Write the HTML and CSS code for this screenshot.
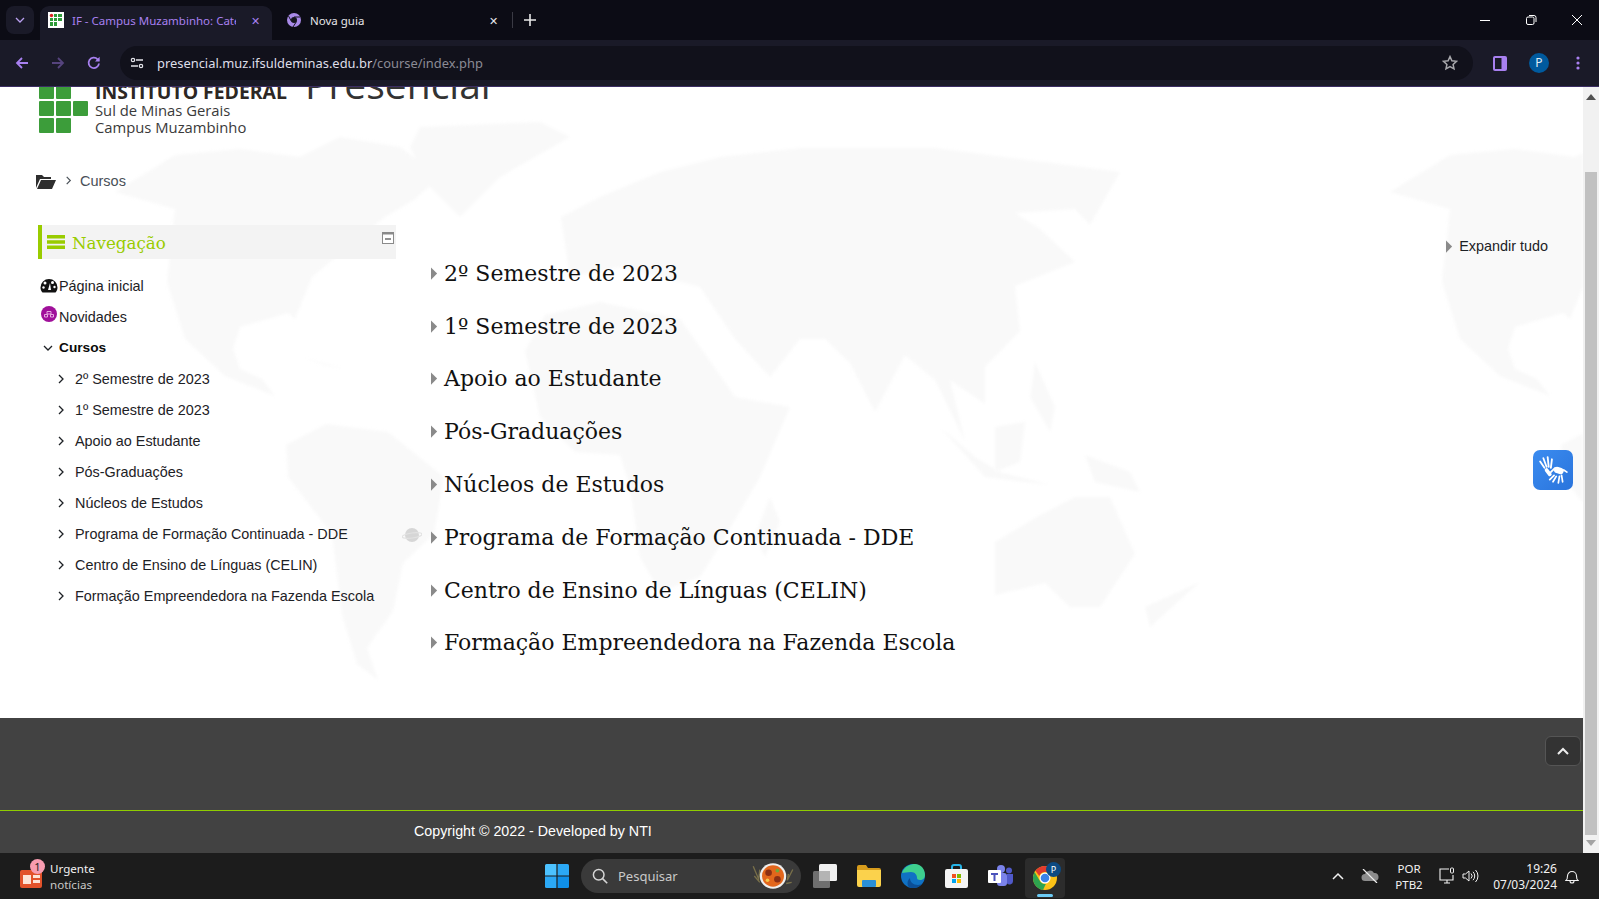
FILE: index.html
```html
<!DOCTYPE html>
<html lang="pt-BR">
<head>
  <meta charset="UTF-8" />
  <meta name="viewport" content="width=device-width, initial-scale=1.0" />
  <title>IF - Campus Muzambinho: Categorias</title>
  <link rel="stylesheet" href="styles.css">
</head>
<body>
  <svg class="defs" width="0" height="0">
    <defs>
      <symbol id="chev-right" viewBox="0 0 10 10"><path d="M3 1l4 4-4 4" fill="none" stroke="currentColor" stroke-width="1.3"/></symbol>
      <symbol id="chev-down" viewBox="0 0 10 10"><path d="M1 3l4 4 4-4" fill="none" stroke="currentColor" stroke-width="1.3"/></symbol>
      <symbol id="tri-right" viewBox="0 0 8 14"><path d="M0 0l7 7-7 7z" fill="currentColor"/></symbol>
      <g id="americas">
        <path d="M115 105L175 68 240 62 300 70 340 50 400 60 440 90 415 112 385 130 360 150 312 190 295 232 288 226 240 240 233 262 240 282 262 292 290 329 275 309 225 289 185 252 167 195 175 122z"/>
        <path d="M286 358L326 337 388 345 444 390 434 447 403 476 393 524 367 561 378 593 357 577 342 528 332 447 288 390z"/>
        <path d="M420 40L540 35 570 50 500 90 460 130 430 100 410 60z"/>
        <path d="M300 270L345 282 325 278z"/>
      </g>
      <g id="old-world">
        <path d="M525 264L545 228 600 215 680 232 700 260 735 310 790 320 760 390 725 450 700 490 660 505 640 470 630 400 620 368 575 365 540 330z"/>
        <path d="M561 130L600 110 660 85 720 70 800 61 935 61 1120 85 1090 138 1075 122 1015 126 1040 142 1075 175 1015 199 1020 244 985 280 985 317 950 293 965 354 935 293 905 268 875 325 850 276 825 252 800 252 770 290 735 252 700 200 620 180 570 190z"/>
        <path d="M995 455L1035 431 1075 410 1110 410 1135 467 1100 520 1070 520 1045 496 995 508z"/>
        <path d="M940 340L985 390 1050 398 1000 385 975 370zM995 340L1025 335 1020 375 995 385zM1085 368L1130 385 1140 405 1095 395zM1145 520L1200 495 1150 540z"/>
        <path d="M1035 275L1055 320 1050 345 1030 310z"/>
        <path d="M770 410L780 435 765 470 755 450z"/>
      </g>
    </defs>
  </svg>

  <header class="chrome">
    <div class="tabstrip">
      <div class="tab-search"><svg width="10" height="10"><use href="#chev-down"/></svg></div>
      <div class="tab tab-active">
        <svg class="favicon" viewBox="0 0 16 16" width="16" height="16">
          <rect width="16" height="16" fill="#fff"/>
          <circle cx="3.5" cy="3.5" r="1.7" fill="#d22"/>
          <path fill="#2e9a3a" d="M6 2h3v3H6zM10 2h4v3h-4zM2 6h3v3H2zM6 6h3v3H6zM10 6h4v3h-4zM2 10h3v4H2zM6 10h3v4H6z"/>
        </svg>
        <span class="tab-title">IF - Campus Muzambinho: Cate</span>
        <span class="tab-close">✕</span>
      </div>
      <div class="tab tab-idle">
        <svg class="favicon" viewBox="0 0 16 16" width="16" height="16">
          <circle cx="8" cy="8" r="7" fill="#a98ae8"/>
          <circle cx="8" cy="8" r="3" fill="#15151f"/>
          <path d="M8 5h6M5.5 9.5L2.5 4M10.5 9.5L7 15" stroke="#15151f" stroke-width="1"/>
        </svg>
        <span class="tab-title">Nova guia</span>
        <span class="tab-close">✕</span>
      </div>
      <span class="tab-divider"></span>
      <svg class="new-tab" width="12" height="12" viewBox="0 0 12 12"><path d="M6 0v12M0 6h12" stroke="#e8e8e8" stroke-width="1.6"/></svg>
      <div class="window-controls">
        <svg width="12" height="12" viewBox="0 0 12 12"><path d="M1 6.5h10" stroke="#fff"/></svg>
        <svg width="12" height="12" viewBox="0 0 12 12"><rect x="1.5" y="3" width="7.5" height="7.5" rx="1.5" fill="none" stroke="#fff"/><path d="M4 1.5h5a2 2 0 0 1 2 2V8" fill="none" stroke="#fff"/></svg>
        <svg width="12" height="12" viewBox="0 0 12 12"><path d="M1 1l10 10M11 1L1 11" stroke="#fff"/></svg>
      </div>
    </div>
    <div class="toolbar">
      <svg class="nav-btn" width="16" height="16" viewBox="0 0 16 16"><path d="M14 8H3M8 3L3 8l5 5" fill="none" stroke="#a880f0" stroke-width="1.8"/></svg>
      <svg class="nav-btn" width="16" height="16" viewBox="0 0 16 16"><path d="M2 8h11M8 3l5 5-5 5" fill="none" stroke="#56447e" stroke-width="1.8"/></svg>
      <svg class="nav-btn" width="16" height="16" viewBox="0 0 16 16"><path d="M13 8.5A5.2 5.2 0 1 1 11.6 4.3L13 5.7" fill="none" stroke="#a880f0" stroke-width="1.8"/><path d="M13.6 1.8v4.7H9z" fill="#a880f0"/></svg>
      <div class="omnibox">
        <span class="site-info">
          <svg width="14" height="12" viewBox="0 0 14 12"><path d="M6 3h7M1 9h7" stroke="#e4e4ea" stroke-width="1.4"/><circle cx="3" cy="3" r="1.7" fill="none" stroke="#e4e4ea" stroke-width="1.2"/><circle cx="11" cy="9" r="1.7" fill="none" stroke="#e4e4ea" stroke-width="1.2"/></svg>
        </span>
        <span class="url">presencial.muz.ifsuldeminas.edu.br<span class="url-path">/course/index.php</span></span>
        <svg class="star" width="16" height="16" viewBox="0 0 16 16"><path d="M8 1.6l1.9 4.2 4.6.5-3.4 3.1.9 4.5L8 11.6l-4 2.3.9-4.5L1.5 6.3l4.6-.5z" fill="none" stroke="#a8a8ac" stroke-width="1.5"/></svg>
      </div>
      <svg class="side-panel" width="14" height="15" viewBox="0 0 14 15"><rect width="14" height="15" rx="2" fill="#a880f0"/><rect x="2" y="2" width="6.5" height="11" fill="#1a1a28"/></svg>
      <span class="avatar">P</span>
      <svg class="menu-dots" width="4" height="14" viewBox="0 0 4 14"><circle cx="2" cy="2" r="1.6" fill="#a880f0"/><circle cx="2" cy="7" r="1.6" fill="#a880f0"/><circle cx="2" cy="12" r="1.6" fill="#a880f0"/></svg>
    </div>
  </header>

  <div class="viewport">
    <div class="page">
      <svg class="world-map" viewBox="0 0 1583 630" width="1583" height="630">
        <use href="#americas"/>
        <use href="#old-world"/>
        <use href="#americas" x="1275"/>
      </svg>

      <div class="site-header">
        <div class="logo">
          <div class="logo-mark">
            <span></span><span></span><i></i>
            <span></span><span></span><span></span>
            <span></span><span></span><i></i>
          </div>
          <div class="logo-text">
            <strong>INSTITUTO FEDERAL</strong>
            <span>Sul de Minas Gerais</span>
            <span>Campus Muzambinho</span>
          </div>
        </div>
        <div class="brand">Presencial</div>
      </div>

      <nav class="breadcrumb">
        <svg width="20" height="17" viewBox="0 0 20 17"><path d="M0 15V2h6l2 2h7v2H4L0 15zM1 16l4-9h15l-4 9z" fill="#2e2e2e"/></svg>
        <svg class="crumb-sep" width="9" height="9"><use href="#chev-right"/></svg>
        <a>Cursos</a>
      </nav>

      <div class="layout">
        <aside class="sidebar">
          <div class="block-title">
            <svg width="18" height="14" viewBox="0 0 18 14"><path d="M0 0h18v3.4H0zM0 5.3h18v3.4H0zM0 10.6h18V14H0z" fill="#99cc00"/></svg>
            <h2>Navegação</h2>
            <svg class="block-toggle" width="12" height="12" viewBox="0 0 12 12"><rect x=".5" y=".5" width="11" height="11" fill="#fff" stroke="#8a8a8a"/><path d="M0 0h12v2.5H0z" fill="#8a8a8a"/><path d="M3 7h6" stroke="#777" stroke-width="1.6"/></svg>
          </div>
          <ul class="nav-tree">
            <li class="nav-top">
              <svg class="nav-icon" width="18" height="15" viewBox="0 0 18 15"><path d="M9 1a8.500 8.500 0 0 0-8.500 8.500c0 2 .8 3.700 2 5h13c1.200-1.300 2-3 2-5A8.500 8.500 0 0 0 9 1z" fill="#111"/><circle cx="5" cy="5" r="1.500" fill="#fff"/><circle cx="12.500" cy="4.500" r="1.500" fill="#fff"/><path d="M8 12l2-7 1 7z" fill="#fff"/><circle cx="3.500" cy="9.500" r="1.200" fill="#fff"/><circle cx="14.500" cy="9" r="1.200" fill="#fff"/></svg>
              <a>Página inicial</a>
            </li>
            <li class="nav-top">
              <svg class="nav-icon nav-icon-news" width="16" height="16" viewBox="0 0 16 16"><circle cx="8" cy="8" r="8" fill="#a0109a"/><path d="M3.500 11V8.500h3V11zM9.500 11V8.500h3V11zM6 8V5.500h4V8z" fill="none" stroke="#eeb8e8" stroke-width=".9"/></svg>
              <a>Novidades</a>
            </li>
            <li class="nav-top nav-open">
              <svg class="nav-chev" width="10" height="10"><use href="#chev-down"/></svg>
              <a>Cursos</a>
            </li>
            <li class="nav-sub"><svg width="10" height="10"><use href="#chev-right"/></svg><a>2º Semestre de 2023</a></li>
            <li class="nav-sub"><svg width="10" height="10"><use href="#chev-right"/></svg><a>1º Semestre de 2023</a></li>
            <li class="nav-sub"><svg width="10" height="10"><use href="#chev-right"/></svg><a>Apoio ao Estudante</a></li>
            <li class="nav-sub"><svg width="10" height="10"><use href="#chev-right"/></svg><a>Pós-Graduações</a></li>
            <li class="nav-sub"><svg width="10" height="10"><use href="#chev-right"/></svg><a>Núcleos de Estudos</a></li>
            <li class="nav-sub"><svg width="10" height="10"><use href="#chev-right"/></svg><a>Programa de Formação Continuada - DDE</a></li>
            <li class="nav-sub"><svg width="10" height="10"><use href="#chev-right"/></svg><a>Centro de Ensino de Línguas (CELIN)</a></li>
            <li class="nav-sub"><svg width="10" height="10"><use href="#chev-right"/></svg><a>Formação Empreendedora na Fazenda Escola</a></li>
          </ul>
        </aside>

        <main class="content">
          <div class="expand-all">
            <svg width="7" height="13"><use href="#tri-right"/></svg>
            <a>Expandir tudo</a>
          </div>
          <div class="category"><svg width="7" height="13"><use href="#tri-right"/></svg><h3>2º Semestre de 2023</h3></div>
          <div class="category"><svg width="7" height="13"><use href="#tri-right"/></svg><h3>1º Semestre de 2023</h3></div>
          <div class="category"><svg width="7" height="13"><use href="#tri-right"/></svg><h3>Apoio ao Estudante</h3></div>
          <div class="category"><svg width="7" height="13"><use href="#tri-right"/></svg><h3>Pós-Graduações</h3></div>
          <div class="category"><svg width="7" height="13"><use href="#tri-right"/></svg><h3>Núcleos de Estudos</h3></div>
          <div class="category"><svg width="7" height="13"><use href="#tri-right"/></svg><h3>Programa de Formação Continuada - DDE</h3></div>
          <div class="category"><svg width="7" height="13"><use href="#tri-right"/></svg><h3>Centro de Ensino de Línguas (CELIN)</h3></div>
          <div class="category"><svg width="7" height="13"><use href="#tri-right"/></svg><h3>Formação Empreendedora na Fazenda Escola</h3></div>
        </main>
      </div>

      <footer class="site-footer">
        <div class="footer-top"></div>
        <div class="footer-copy">Copyright © 2022 - Developed by NTI</div>
      </footer>

      <svg class="planet" width="20" height="16" viewBox="0 0 20 16"><ellipse cx="10" cy="8" rx="7" ry="7" fill="#d6d6d6"/><ellipse cx="10" cy="8.500" rx="10" ry="2.500" fill="none" stroke="#e2e2e2" stroke-width="1.200" transform="rotate(-8 10 8)"/></svg>

      <a class="back-top"><svg width="12" height="8" viewBox="0 0 12 8"><path d="M1 7l5-5 5 5" fill="none" stroke="#eee" stroke-width="2"/></svg></a>

      <div class="vlibras">
        <svg width="30" height="28" viewBox="0 0 28 26">
          <g fill="none" stroke="#fff" stroke-linecap="round">
            <path stroke-width="1.700" d="M6 11L2 5M8 10L5 2M10 10L9 1M12 11L13 3M12 15l4-4"/>
            <path stroke-width="3.500" d="M8 13l3 4"/>
            <path stroke-width="6" d="M18 13l3 1"/>
            <path stroke-width="1.600" d="M15 18l-4 4M17 19l-3 5M20 19l-1 6M22 18l1 6M24 13l3 2"/>
          </g>
        </svg>
      </div>
    </div>

    <div class="scrollbar">
      <svg class="scroll-arrow" width="10" height="6" viewBox="0 0 10 6"><path d="M5 0l5 6H0z" fill="#505050"/></svg>
      <div class="scroll-thumb"></div>
      <svg class="scroll-arrow" width="10" height="6" viewBox="0 0 10 6"><path d="M0 0h10L5 6z" fill="#a3a3a3"/></svg>
    </div>
  </div>

  <footer class="taskbar">
    <div class="widget">
      <span class="news-icon">
        <svg width="23" height="19" viewBox="0 0 23 19"><rect width="22" height="18" y="1" rx="2" fill="#e2522a"/><rect x="3" y="6" width="8" height="9" fill="#fde3d6"/><path d="M13 6h7v3h-7zM13 11h7v3h-7z" fill="#fde3d6"/></svg>
        <b class="news-badge">1</b>
      </span>
      <div class="widget-text"><span>Urgente</span><span class="widget-sub">notícias</span></div>
    </div>

    <div class="task-center">
      <svg class="task-icon win" width="24" height="24" viewBox="0 0 24 24"><path fill="#4cc2ff" d="M0 1.500A1.500 1.500 0 0 1 1.500 0H11.400v11.400H0z"/><path fill="#2ba8f5" d="M12.600 0h9.900A1.500 1.500 0 0 1 24 1.500v9.900H12.600z"/><path fill="#2ba8f5" d="M0 12.600h11.400V24H1.500A1.500 1.500 0 0 1 0 22.500z"/><path fill="#0f8fe8" d="M12.600 12.600H24v9.900a1.500 1.500 0 0 1-1.500 1.500h-9.900z"/></svg>
      <div class="search-pill">
        <svg width="16" height="16" viewBox="0 0 16 16"><circle cx="6.700" cy="6.700" r="5.300" fill="none" stroke="#d6d6d6" stroke-width="1.500"/><path d="M10.600 10.600l4.600 4.600" stroke="#d6d6d6" stroke-width="1.600"/></svg>
        <span>Pesquisar</span>
        <svg class="search-art" width="44" height="30" viewBox="0 0 40 28" preserveAspectRatio="none">
          <path d="M2 5l5 12 1-9M38 8l-5 10 1-6M3 14l5 6M37 20l-5 1" fill="none" stroke="#79704a" stroke-width="1.200"/>
          <circle cx="20" cy="14" r="12" fill="#eee"/>
          <circle cx="20" cy="14" r="10" fill="#e2661c"/>
          <circle cx="16" cy="11" r="3" fill="#8b2f14"/><circle cx="24" cy="17" r="3" fill="#8b2f14"/><circle cx="24" cy="9" r="1.700" fill="#6fa83a"/><circle cx="15" cy="18" r="1.700" fill="#f4c54a"/>
        </svg>
      </div>
      <svg class="task-icon" width="24" height="24" viewBox="0 0 24 24"><rect y="7" width="17" height="17" rx="1.500" fill="#6f6f6f"/><rect x="6" width="18" height="17" rx="1.500" fill="#f1f1f1"/><rect x="6" y="7" width="11" height="10" fill="#b4b4b4"/></svg>
      <svg class="task-icon" width="24" height="22" viewBox="0 0 24 22"><path d="M0 2a2 2 0 0 1 2-2h7l2 3h11a2 2 0 0 1 2 2v2H0z" fill="#d79c1c"/><path d="M0 5h24v15a2 2 0 0 1-2 2H2a2 2 0 0 1-2-2z" fill="#fbd24c"/><rect x="5" y="15" width="14" height="7" rx="1" fill="#2a8fd6"/></svg>
      <svg class="task-icon" width="24" height="24" viewBox="0 0 24 24"><circle cx="12" cy="12" r="12" fill="#1072c4"/><path d="M1 9C3 2 10 0 14 0c6 0 10 5 10 11 0 3-2 5-5 5-2 0-3-1-3-2 0-3-2-6-6-6C6 8 3 9 1 9z" fill="#3ecf8e"/><path d="M9 14c0 4 3 7 8 7 2 0 4-1 5-2-2 3-6 5-10 5-2 0-4-.5-5-2-1-3-.5-6 2-8z" fill="#0b4e97"/></svg>
      <svg class="task-icon" width="23" height="24" viewBox="0 0 23 24"><path d="M7 7V3a2 2 0 0 1 2-2h5a2 2 0 0 1 2 2v4" fill="none" stroke="#27b5e8" stroke-width="2"/><rect y="5" width="23" height="19" rx="2" fill="#f4f4f4"/><path fill="#f25022" d="M7 10h4v4H7z"/><path fill="#7fba00" d="M12 10h4v4h-4z"/><path fill="#00a4ef" d="M7 15h4v4H7z"/><path fill="#ffb900" d="M12 15h4v4h-4z"/></svg>
      <svg class="task-icon" width="25" height="24" viewBox="0 0 25 24"><circle cx="13" cy="5" r="4" fill="#7b83eb"/><circle cx="21" cy="6.500" r="3" fill="#5059c9"/><rect x="9" y="9" width="10" height="13" rx="3" fill="#7b83eb"/><path d="M19 10h6v7a3.500 3.500 0 0 1-6 2.500z" fill="#5059c9"/><rect y="6" width="13" height="13" rx="1" fill="#fff"/><path d="M3 9h7v2H7.500v6h-2v-6H3z" fill="#4b53bc"/></svg>
      <div class="task-active">
        <svg width="24" height="24" viewBox="0 0 24 24"><circle cx="12" cy="12" r="12" fill="#fbc116"/><path d="M12 0a12 12 0 0 1 10.400 6H12a6 6 0 0 0-5.700 4L2.400 4.800A12 12 0 0 1 12 0z" fill="#e33b2e"/><path d="M1.600 6l5 8.600a6 6 0 0 0 6.200 3.300L10 23.900A12 12 0 0 1 1.600 6z" fill="#2ea44f"/><circle cx="12" cy="12" r="5.500" fill="#fff"/><circle cx="12" cy="12" r="4.300" fill="#3b82e8"/></svg>
        <b class="chrome-badge">P</b>
        <i class="task-indicator"></i>
      </div>
    </div>

    <div class="tray">
      <svg width="12" height="8" viewBox="0 0 12 8"><path d="M1 7l5-5 5 5" fill="none" stroke="#f2f2f2" stroke-width="1.500"/></svg>
      <svg class="tray-cloud" width="18" height="14" viewBox="0 0 18 14"><path d="M4 12a3.500 3.500 0 0 1 0-7 5 5 0 0 1 9-1 4 4 0 0 1 1 8z" fill="#8d8d8d"/><path d="M2 0l14 14" stroke="#eee" stroke-width="1.200"/></svg>
      <div class="tray-lang"><span>POR</span><span>PTB2</span></div>
      <svg class="tray-net" width="16" height="18" viewBox="0 0 16 18"><path d="M10 2H1v11h13V8M5 16h6M8 13v3" fill="none" stroke="#f2f2f2" stroke-width="1.100"/><rect x="11.500" y="1" width="3" height="5" rx="1" fill="none" stroke="#f2f2f2"/></svg>
      <svg class="tray-sound" width="17" height="14" viewBox="0 0 17 14"><path d="M1 5v4h2.500L7 12V2L3.500 5z" fill="none" stroke="#f2f2f2"/><path d="M9 4.500a3.500 3.500 0 0 1 0 5M11 2.800a6 6 0 0 1 0 8.400M13.500 1a8.500 8.500 0 0 1 0 12" fill="none" stroke="#f2f2f2"/></svg>
      <div class="tray-clock"><span>19:26</span><span>07/03/2024</span></div>
      <svg class="tray-bell" width="14" height="15" viewBox="0 0 14 15"><path d="M1 11.500c1.200-1 1.500-2 1.500-4.500a4.500 4.500 0 0 1 9 0c0 2.500.3 3.500 1.500 4.500zM5 12a2 2 0 0 0 4 0" fill="none" stroke="#f2f2f2" stroke-width="1.100"/></svg>
    </div>
  </footer>
</body>
</html>
```

FILE: styles.css
```css
* {
  box-sizing: border-box;
}
html, body {
  height: 100%;
}
body {
  margin: 0;
  height: 899px;
  overflow: hidden;
  display: flex;
  flex-direction: column;
  font-family: "Liberation Sans", Arial, sans-serif;
  background: #fff;
}
ul {
  list-style: none;
  margin: 0;
  padding: 0;
}
.defs {
  display: block;
  height: 0;
}

/* browser chrome */
.chrome {
  flex: none;
  height: 87px;
  font-family: "Noto Sans", sans-serif;
  border-bottom: 1px solid #3b2d63;
  background: #1a1a28;
}
.tabstrip {
  height: 40px;
  background: #0c0c15;
  display: flex;
  align-items: flex-end;
  padding-left: 6px;
  position: relative;
}
.tab-search {
  width: 28px;
  height: 28px;
  margin-bottom: 6px;
  border-radius: 8px;
  background: #1a1a28;
  color: #b9a0f0;
  display: flex;
  align-items: center;
  justify-content: center;
}
.tab {
  height: 34px;
  display: flex;
  align-items: center;
  font-size: 11.500px;
  padding-bottom: 6px;
}
.tab-active {
  width: 232px;
  margin-left: 6px;
  padding-left: 8px;
  padding-right: 8px;
  background: #1a1a28;
  border-radius: 9px 9px 0 0;
  color: #a880f0;
}
.tab-idle {
  width: 238px;
  padding-left: 14px;
  padding-right: 8px;
  color: #e6e6ea;
}
.tab .favicon {
  flex: none;
  margin-right: 8px;
}
.tab-title {
  flex: 1;
  white-space: nowrap;
  overflow: hidden;
}
.tab-close {
  font-size: 11px;
  width: 18px;
  text-align: center;
}
.tab-active .tab-title {
  max-width: 166px;
  margin-right: 10px;
}
.tab-divider {
  width: 1px;
  height: 16px;
  margin: 0 0 12px 2px;
  background: #3a3a44;
}
.new-tab {
  margin: 0 0 14px 11px;
}
.window-controls {
  margin-left: auto;
  display: flex;
  gap: 34px;
  padding: 0 16px 0 0;
  margin-bottom: 14px;
}
.toolbar {
  height: 46px;
  display: flex;
  align-items: center;
  padding-left: 14px;
}
.nav-btn {
  margin-right: 20px;
}
.omnibox {
  width: 1353px;
  height: 34px;
  margin-left: -2px;
  background: #11111b;
  border-radius: 17px;
  display: flex;
  align-items: center;
  padding-left: 10px;
}
.site-info {
  width: 14px;
  display: flex;
  margin-right: 13px;
}
.url {
  font-size: 12.900px;
  color: #dedee8;
}
.url-path {
  color: #8b8b95;
}
.star {
  margin-left: auto;
  margin-right: 15px;
}
.side-panel {
  margin-left: 20px;
}
.avatar {
  width: 20px;
  height: 20px;
  margin-left: 22px;
  border-radius: 50%;
  background: #005a9e;
  color: #dfeaf5;
  font-size: 12px;
  text-align: center;
  line-height: 20px;
}
.menu-dots {
  margin-left: 27px;
}

/* page area */
.viewport {
  flex: none;
  height: 766px;
  display: flex;
}
.page {
  position: relative;
  width: 1583px;
  overflow: hidden;
  display: flex;
  flex-direction: column;
  color: #1d2125;
}
.world-map {
  position: absolute;
  left: 0;
  top: 0;
  fill: #f9f9f9;
  filter: blur(1.5px);
}
.site-header, .breadcrumb, .layout, .site-footer {
  position: relative;
}
.site-header {
  flex: none;
  height: 92px;
  margin-top: -24px;
  padding-left: 39px;
  display: flex;
}
.logo {
  display: flex;
  height: 75px;
}
.logo-mark {
  width: 48px;
  display: grid;
  grid-template-columns: repeat(3, 15px);
  grid-template-rows: repeat(3, 15px);
  gap: 2px;
  margin-top: 21px;
  height: 49px;
}
.logo-mark span {
  background: #3c9d3a;
  border-radius: 1px;
}
.logo-text {
  margin-left: 8px;
  display: flex;
  flex-direction: column;
  font-family: "Open Sans", sans-serif;
  font-size: 14.800px;
  line-height: 17px;
  color: #3a3a3a;
  padding-top: 19px;
}
.logo-text strong {
  font-size: 19.400px;
  line-height: 20px;
  color: #2c2724;
  white-space: nowrap;
}
.brand {
  margin-left: 18px;
  font-family: "Open Sans", sans-serif;
  font-size: 39px;
  line-height: 50px;
  color: #333;
  margin-top: -4px;
}
.breadcrumb {
  flex: none;
  height: 52px;
  padding-left: 36px;
  display: flex;
  align-items: center;
  font-size: 14.500px;
  color: #495057;
}
.crumb-sep {
  margin: 0 7px 0 8px;
  position: relative;
  top: -1px;
}
.layout {
  flex: 1;
  display: flex;
  padding: 18px 35px 0 38px;
}
.sidebar {
  width: 358px;
  flex: none;
}
.block-title {
  height: 34px;
  background: #f3f3f3;
  border-left: 4px solid #99cc00;
  padding-left: 5px;
  display: flex;
  align-items: center;
  position: relative;
}
.block-title h2 {
  margin: 1px 0 0 7px;
  font-family: "DejaVu Serif", serif;
  font-weight: 400;
  font-size: 16.700px;
  color: #99cc00;
}
.block-toggle {
  position: absolute;
  right: 2px;
  top: 7px;
}
.nav-tree {
  margin-top: 11px;
  font-size: 14.400px;
}
.nav-tree li {
  height: 31px;
  display: flex;
  align-items: center;
}
.nav-icon {
  margin: 0 1px 0 2px;
  flex: none;
}
.nav-icon-news {
  position: relative;
  top: -3px;
  margin-right: 2px;
  margin-left: 3px;
}
.nav-chev {
  margin: 0 6px 0 5px;
}
.nav-open a {
  font-weight: 700;
  color: #0a0a0a;
  font-size: 13.700px;
}
.nav-sub {
  padding-left: 18px;
}
.nav-sub svg {
  margin-right: 9px;
}
.nav-top a, .nav-sub a {
  white-space: nowrap;
}
.content {
  flex: 1;
  margin-left: 35px;
}
.expand-all {
  height: 22px;
  margin-top: 10px;
  display: flex;
  justify-content: flex-end;
  align-items: center;
  font-size: 14.400px;
  color: #1d2125;
}
.expand-all svg {
  color: #8a8a8a;
  margin-right: 6px;
}
.category {
  height: 52.800px;
  display: flex;
  align-items: center;
  color: #8a8a8a;
}
.category h3 {
  margin: 0 0 0 6px;
  font-family: "DejaVu Serif", serif;
  font-weight: 400;
  font-size: 22px;
  color: #111;
  white-space: nowrap;
}
.expand-all + .category {
  margin-top: -10px;
}
.site-footer {
  flex: none;
  height: 135px;
  background: #424242;
  color: #fff;
}
.footer-top {
  height: 93px;
  border-bottom: 1px solid #8fcc00;
}
.footer-copy {
  padding: 12px 0 0 414px;
  font-size: 14.250px;
}
.planet {
  position: absolute;
  left: 402px;
  top: 440px;
}
.back-top {
  position: absolute;
  left: 1545px;
  top: 649px;
  width: 36px;
  height: 30px;
  background: #333;
  border: 1px solid #555;
  border-radius: 6px;
  display: flex;
  align-items: center;
  justify-content: center;
}
.vlibras {
  position: absolute;
  left: 1533px;
  top: 363px;
  width: 40px;
  height: 40px;
  border-radius: 7px;
  background: linear-gradient(135deg, #3b8cf0, #2a74dc);
  display: flex;
  align-items: center;
  justify-content: center;
}
.scrollbar {
  width: 16px;
  background: #f1f1f1;
  display: flex;
  flex-direction: column;
  align-items: center;
  padding: 7px 0 7px;
}
.scroll-thumb {
  width: 12px;
  height: 663px;
  margin: 72px 0 5px;
  background: #c1c1c1;
}

/* taskbar */
.taskbar {
  flex: none;
  height: 46px;
  background: #1c1c1c;
  position: relative;
  font-family: "Noto Sans", sans-serif;
  color: #f2f2f2;
  font-size: 11.600px;
  display: flex;
  align-items: center;
}
.widget {
  display: flex;
  align-items: center;
  padding-left: 20px;
}
.news-icon {
  position: relative;
  width: 30px;
  height: 20px;
  margin-top: 6px;
}
.news-badge {
  position: absolute;
  left: 10px;
  top: -10px;
  width: 15px;
  height: 15px;
  border-radius: 50%;
  background: #f89cb0;
  color: #222;
  font-size: 11px;
  font-weight: 400;
  text-align: center;
  line-height: 15px;
}
.widget-text {
  display: flex;
  flex-direction: column;
  line-height: 16px;
  padding-top: 1px;
}
.widget-sub {
  color: #c8c8c8;
}
.task-center {
  position: absolute;
  left: 545px;
  top: 0;
  height: 46px;
  display: flex;
  align-items: center;
}
.task-icon {
  flex: none;
  margin-right: 20px;
}
.task-icon.win {
  margin-right: 12px;
}
.search-pill {
  width: 220px;
  height: 34px;
  margin-right: 12px;
  border-radius: 17px;
  background: #3a3a3a;
  display: flex;
  align-items: center;
  padding-left: 11px;
  font-size: 13px;
  color: #c9c9c9;
  position: relative;
}
.search-pill span {
  margin-left: 10px;
}
.search-art {
  margin-left: auto;
  margin-right: 6px;
}
.task-active {
  position: relative;
  width: 40px;
  height: 40px;
  margin-top: 4px;
  margin-left: -8px;
  background: #2c2c2c;
  border-radius: 4px;
  display: flex;
  justify-content: center;
  align-items: center;
}
.chrome-badge {
  position: absolute;
  right: 4px;
  top: 4px;
  width: 15px;
  height: 15px;
  border-radius: 50%;
  background: #0c4a82;
  color: #fff;
  font-size: 9px;
  font-weight: 400;
  text-align: center;
  line-height: 15px;
}
.task-indicator {
  position: absolute;
  left: 12px;
  bottom: 1px;
  width: 16px;
  height: 3px;
  border-radius: 2px;
  background: #6ccbf5;
}
.tray {
  position: absolute;
  left: 1332px;
  top: 0;
  width: 267px;
  height: 46px;
  display: flex;
  align-items: center;
}
.tray-cloud {
  margin-left: 17px;
}
.tray-lang {
  width: 40px;
  margin-left: 10px;
  display: flex;
  flex-direction: column;
  align-items: center;
  line-height: 16px;
  font-size: 11.500px;
  padding-top: 1px;
}
.tray-net {
  margin-left: 10px;
}
.tray-sound {
  margin-left: 7px;
}
.tray-clock {
  width: 78px;
  display: flex;
  flex-direction: column;
  align-items: flex-end;
  line-height: 16px;
  font-size: 12px;
  padding-top: 1px;
}
.tray-bell {
  margin-left: 8px;
}
```
